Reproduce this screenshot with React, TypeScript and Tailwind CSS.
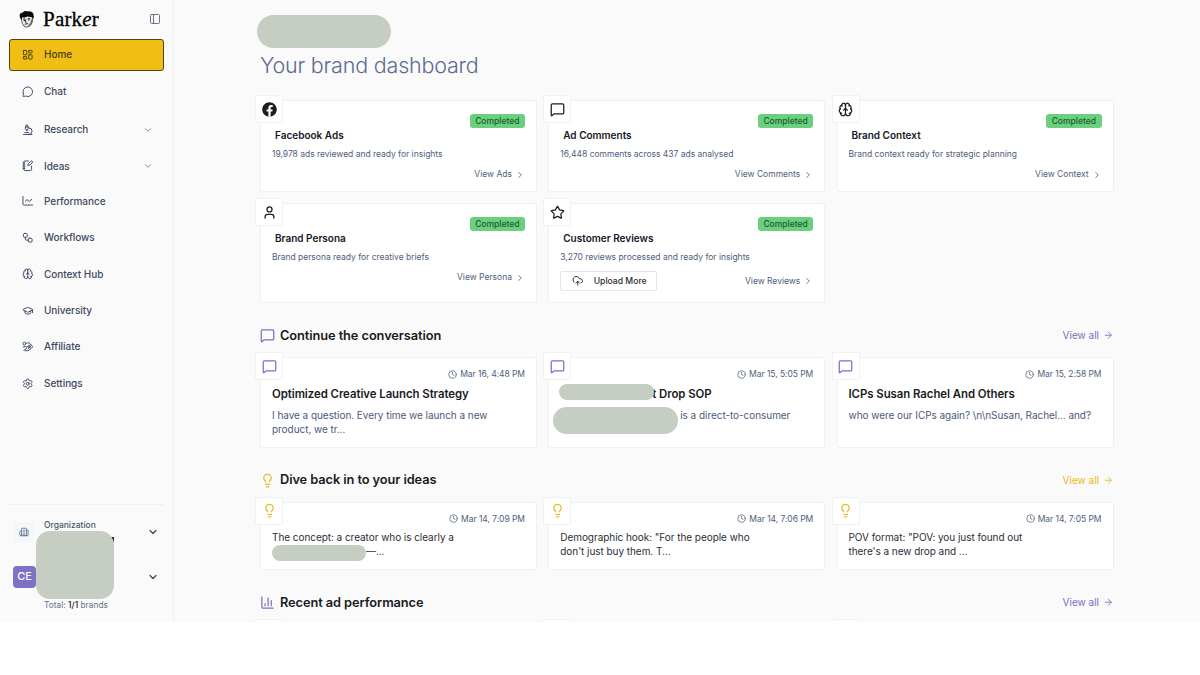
import type { ReactNode } from 'react';
import {
  ArrowRight, Brain, Building2, ChartColumn, ChevronDown, ChevronRight, Clock, CloudUpload,
  GraduationCap, LayoutDashboard, Lightbulb, MessageCircle, MessageSquare, Microscope, NotebookPen,
  PanelLeft, Settings, Star, User, Workflow,
} from 'lucide-react';
import { FaFacebook } from 'react-icons/fa';

const ic = 'size-[11.5px] shrink-0';

function Affiliate() {
  return (
    <svg viewBox="0 0 24 24" className={ic} fill="none" stroke="currentColor" strokeWidth="2" strokeLinecap="round" strokeLinejoin="round">
      <circle cx="5" cy="5.500" r="3" />
      <path d="M10.500 4h4c2 0 3 1.500 4 3.500" />
      <path d="M2.500 12.500c3-1.500 6-1.500 7 .5s-1.500 5-5.500 6.500" />
      <path d="M7 20.500c6 .5 10-2 15.500-8.500l-4-4.500-8.500 5" />
      <path d="M13 16l5-4.500" />
      <circle cx="15.500" cy="12" r="2" />
    </svg>
  );
}

function TrendLine() {
  return (
    <svg viewBox="0 0 24 24" className={ic} fill="none" stroke="currentColor" strokeWidth="2" strokeLinecap="round" strokeLinejoin="round">
      <path d="M2 3v16a2 2 0 0 0 2 2h18" />
      <path d="m7 13 3.500-3.500 4.500 4 5.500-4.500" />
    </svg>
  );
}

function Face() {
  return (
    <svg viewBox="0 0 16 18" className="h-[18px] w-4 shrink-0">
      <path d="M2.600 7C2.400 11 3.200 17 7.500 17C11.500 17 14 13 13.700 7L11 5H4z" fill="#eeeeee" stroke="#333" strokeWidth=".8" />
      <path d="M1.200 8.200C-.2 4.500 1.200 2.200 3.600 2.700C4.500.8 7.500.6 8.800 1.500C11.500.8 14.900 2.600 14.500 5.200C15.200 6.500 14.700 8 13.900 9L12.700 7.200L8.500 6.600L5 7.800L3.200 7.300L2.600 9.700z" fill="#0a0a0a" />
      <path d="M4.200 9.300l2-.5M8.600 8.800l2.600-.2M6.900 9.500l-.6 2.600 1.200.2M5.700 14.200l3.400-.6" stroke="#111" strokeWidth=".9" fill="none" />
      <circle cx="5.300" cy="10.200" r=".7" fill="#111" />
      <circle cx="9.800" cy="9.900" r=".7" fill="#111" />
      <path d="M12.600 9.500c.3 3-1 5.500-3.300 6.400" stroke="#666" strokeWidth="1.500" fill="none" />
    </svg>
  );
}

const nav: { label: string; icon: ReactNode; h: string; menu?: boolean }[] = [
  { label: 'Chat', icon: <MessageCircle className={ic} />, h: 'h-[36px]' },
  { label: 'Research', icon: <Microscope className={ic} />, h: 'h-[40px]', menu: true },
  { label: 'Ideas', icon: <NotebookPen className={ic} />, h: 'h-[33px]', menu: true },
  { label: 'Performance', icon: <TrendLine />, h: 'h-[37px]' },
  { label: 'Workflows', icon: <Workflow className={ic} />, h: 'h-[36.4px]' },
  { label: 'Context Hub', icon: <Brain className={ic} />, h: 'h-[36.4px]' },
  { label: 'University', icon: <GraduationCap className={ic} />, h: 'h-[36.4px]' },
  { label: 'Affiliate', icon: <Affiliate />, h: 'h-[36.4px]' },
  { label: 'Settings', icon: <Settings className={ic} />, h: 'h-[36.4px]' },
];

function Sidebar() {
  return (
    <aside className="flex h-full w-[174px] shrink-0 flex-col border-r border-[#f0f1f3] pl-[9px] pr-[9px] text-[#3e4963]">
      <div className="mt-[9px] flex h-5 items-center pl-[10px]">
        <Face />
        <div className="ml-2 whitespace-nowrap font-['Liberation_Serif',serif] text-[21px] leading-5 tracking-[0.2px] text-black [-webkit-text-stroke:0.3px_black]">
          Park<i>e</i>r
        </div>
        <PanelLeft className="ml-auto mr-[3px] size-[12px] text-[#56617a]" strokeWidth={1.75} />
      </div>
      <nav className="mt-[9.5px] flex flex-col text-[10px] font-medium tracking-[-0.05px]">
        <a className="-ml-[0.5px] flex h-[32.5px] w-[155px] items-center gap-[10.5px] rounded-[3px] border border-[#54430d] bg-[#f0be14] pl-[12.5px] text-[#4a3c14]">
          <LayoutDashboard className={ic} />
          Home
        </a>
        <div className="mt-[2.5px] flex flex-col">
          {nav.map((n) => (
            <a key={n.label} className={`flex items-center gap-[10.5px] pl-[13px] ${n.h}`}>
              {n.icon}
              {n.label}
              {n.menu && <ChevronDown className="ml-auto mr-[11px] size-[10px] text-[#6a748a]" />}
            </a>
          ))}
        </div>
      </nav>
      <div className="mt-auto h-[118.5px] border-t border-[#eef0f2]">
        <div className="mt-[16px] flex h-[22px] items-center pl-[5px]">
          <div className="flex size-5 items-center justify-center rounded-[4px] bg-[#f3f7fa]">
            <Building2 className="size-[10px] text-[#5b6b88]" />
          </div>
          <div className="-mt-[14px] ml-[10px] text-[8.5px] font-medium leading-3 text-[#47556f]">Organization</div>
          <ChevronDown className="ml-auto mr-[5px] size-[12px]" strokeWidth={2.5} />
        </div>
        <div className="relative mt-[23px] flex h-[22px] items-center pl-1">
          <div className="flex h-[22px] w-[23px] items-center justify-center rounded-[4px] bg-[#7d72c4] text-[11px] font-medium text-white">CE</div>
          <div className="absolute left-[102px] top-[-29px] h-[5px] w-[3px] bg-[#222]" />
          <div className="absolute left-[27px] top-[-35px] h-[68px] w-[78px] rounded-[14px] bg-[#c6cdc2]" />
          <ChevronDown className="ml-auto mr-[5px] size-[12px]" strokeWidth={2.5} />
        </div>
        <div className="mt-[11px] pl-[35px] text-[8.4px] leading-3 text-[#6b7387]">
          Total: <span className="font-medium text-[#222]">1/1</span> brands
        </div>
      </div>
    </aside>
  );
}

function Tile({ children }: { children?: ReactNode }) {
  return (
    <div className="absolute -left-[6px] -top-[6px] flex size-[28px] items-center justify-center rounded-[2px] border border-[#f0f1f4] bg-white">
      {children}
    </div>
  );
}

const cardCls = 'relative flex flex-col rounded-[2px] border border-[#eff0f3] bg-white px-[11px]';

function StatusCard({ icon, title, text, link, upload }: { icon: ReactNode; title: string; text: string; link: string; upload?: boolean }) {
  return (
    <div className={`${cardCls} pt-[13px] text-[#4f5e7d]`}>
      <Tile>{icon}</Tile>
      <div className="flex h-[14px] items-center self-end rounded-[3px] bg-[#6ad07d] px-[5.5px] text-[8.5px] font-medium text-[#1d5b2c]">Completed</div>
      <div className="pl-[3px] text-[10px] font-semibold leading-[14px] text-[#16181f]">{title}</div>
      <div className="mt-[5px] text-[8.5px] leading-[14px] tracking-[-0.02px]">{text}</div>
      <div className={upload ? 'mt-[7px] flex h-5 items-center' : 'mt-[6.5px] flex h-[14px] items-center'}>
        {upload && (
          <div className="flex h-5 w-[97px] items-center gap-[10px] rounded-[2px] border border-[#e3e4ee] pl-[11px] text-[8.6px] font-medium text-[#2b2d33]">
            <CloudUpload className="size-[11.5px]" />
            Upload More
          </div>
        )}
        <div className="ml-auto flex items-center gap-[3px] text-[8.5px]">
          {link}
          <ChevronRight className="size-[10px]" />
        </div>
      </div>
    </div>
  );
}

function Stamp({ children }: { children: ReactNode }) {
  return (
    <div className="flex h-3 items-center gap-[3px] self-end text-[8.5px] tracking-[-0.05px] text-[#4f5e7d]">
      <Clock className="size-[9px]" />
      {children}
    </div>
  );
}

function Heading({ icon, color, children }: { icon: ReactNode; color: string; children: ReactNode }) {
  return (
    <div className="mb-[11.5px] flex h-5 items-center">
      <div className={`flex w-[14px] justify-center ${color}`}>{icon}</div>
      <h2 className="ml-[6px] text-[12.8px] font-semibold tracking-[-0.08px] text-[#191b22]">{children}</h2>
      <div className={`ml-auto flex items-center gap-1 text-[10px] ${color}`}>
        View all
        <ArrowRight className="size-[10.5px]" />
      </div>
    </div>
  );
}

const dark = 'size-[15px] text-[#1b1d24]';
const purple = 'text-[#7d6fc0]';
const yellow = 'text-[#e6bb22]';
const grid = 'grid grid-cols-3 gap-x-[11.25px]';

export default function App() {
  return (
    <div className="h-[675px] w-[1200px] overflow-hidden bg-white font-['Inter',sans-serif]">
      <div className="flex h-[622px] overflow-hidden bg-[#fafafa]">
        <Sidebar />
        <main className="ml-[86px] w-[853.5px] shrink-0">
          <div className="-ml-[3px] mt-[15px] h-[33px] w-[134px] rounded-[17px] bg-[#c6cdc2]" />
          <h1 className="mt-[3px] text-[21.5px] font-light leading-[28px] tracking-[-0.2px] text-[#5b6c91]">Your brand dashboard</h1>
          <div className={`${grid} mt-[21px] grid-rows-[92px_100px] gap-y-[11px]`}>
            <StatusCard icon={<FaFacebook className={dark} />} title="Facebook Ads" text="19,978 ads reviewed and ready for insights" link="View Ads" />
            <StatusCard icon={<MessageSquare className={dark} />} title="Ad Comments" text="16,448 comments across 437 ads analysed" link="View Comments" />
            <StatusCard icon={<Brain className={dark} />} title="Brand Context" text="Brand context ready for strategic planning" link="View Context" />
            <StatusCard icon={<User className={dark} />} title="Brand Persona" text="Brand persona ready for creative briefs" link="View Persona" />
            <StatusCard icon={<Star className={dark} />} title="Customer Reviews" text="3,270 reviews processed and ready for insights" link="View Reviews" upload />
          </div>

          <section className="mt-[22.5px]">
            <Heading icon={<MessageSquare className="size-[15px] shrink-0" />} color={purple}>Continue the conversation</Heading>
            <div className={`${grid} grid-rows-[90.5px] text-[10px] leading-[14px] tracking-[-0.05px] text-[#4b5a7a]`}>
              <div className={`${cardCls} pt-[10px]`}>
                <Tile><MessageSquare className={`size-[15px] ${purple}`} /></Tile>
                <Stamp>Mar 16, 4:48 PM</Stamp>
                <h3 className="mt-[5.5px] text-[11.4px] font-semibold leading-4 text-[#191b22]">Optimized Creative Launch Strategy</h3>
                <p className="mt-[6px]">I have a question. Every time we launch a new<br />product, we tr...</p>
              </div>
              <div className={`${cardCls} pt-[10px]`}>
                <Tile><MessageSquare className={`size-[15px] ${purple}`} /></Tile>
                <Stamp>Mar 15, 5:05 PM</Stamp>
                <h3 className="mt-[5.5px] pl-[92px] text-[11.4px] font-semibold leading-4 text-[#191b22]">t Drop SOP</h3>
                <p className="mt-[6px] pl-[120px]">is a direct-to-consumer</p>
                <div className="absolute left-[10px] top-[26px] h-4 w-[95px] rounded-full bg-[#c6cdc2]" />
                <div className="absolute left-[4px] top-[49px] h-[27px] w-[125px] rounded-full bg-[#c6cdc2]" />
              </div>
              <div className={`${cardCls} pt-[10px]`}>
                <Tile><MessageSquare className={`size-[15px] ${purple}`} /></Tile>
                <Stamp>Mar 15, 2:58 PM</Stamp>
                <h3 className="mt-[5.5px] text-[11.4px] font-semibold leading-4 text-[#191b22]">ICPs Susan Rachel And Others</h3>
                <p className="mt-[6px]">{'who were our ICPs again? \\n\\nSusan, Rachel... and?'}</p>
              </div>
            </div>
          </section>

          <section className="mt-[22.5px]">
            <Heading icon={<Lightbulb className="size-[15px] shrink-0" />} color={yellow}>Dive back in to your ideas</Heading>
            <div className={`${grid} grid-rows-[68.5px] text-[10px] leading-[14px] tracking-[-0.05px] text-[#2b2d36]`}>
              <div className={`${cardCls} pt-[10px]`}>
                <Tile><Lightbulb className={`size-[15px] ${yellow}`} /></Tile>
                <Stamp>Mar 14, 7:09 PM</Stamp>
                <p className="mt-[5px]">The concept: a creator who is clearly a</p>
                <p className="pl-[94px]">—...</p>
                <div className="absolute left-[11px] top-[42px] h-4 w-[94px] rounded-full bg-[#c6cdc2]" />
              </div>
              <div className={`${cardCls} pt-[10px]`}>
                <Tile><Lightbulb className={`size-[15px] ${yellow}`} /></Tile>
                <Stamp>Mar 14, 7:06 PM</Stamp>
                <p className="mt-[5px]">Demographic hook: "For the people who<br />don't just buy them. T...</p>
              </div>
              <div className={`${cardCls} pt-[10px]`}>
                <Tile><Lightbulb className={`size-[15px] ${yellow}`} /></Tile>
                <Stamp>Mar 14, 7:05 PM</Stamp>
                <p className="mt-[5px]">POV format: "POV: you just found out<br />there's a new drop and ...</p>
              </div>
            </div>
          </section>

          <section className="mt-[22.5px]">
            <Heading icon={<ChartColumn className="size-[15px] shrink-0" />} color={purple}>Recent ad performance</Heading>
            <div className={`${grid} grid-rows-[90px]`}>
              <div className={cardCls}><Tile /></div>
              <div className={cardCls}><Tile /></div>
              <div className={cardCls}><Tile /></div>
            </div>
          </section>
        </main>
      </div>
    </div>
  );
}
